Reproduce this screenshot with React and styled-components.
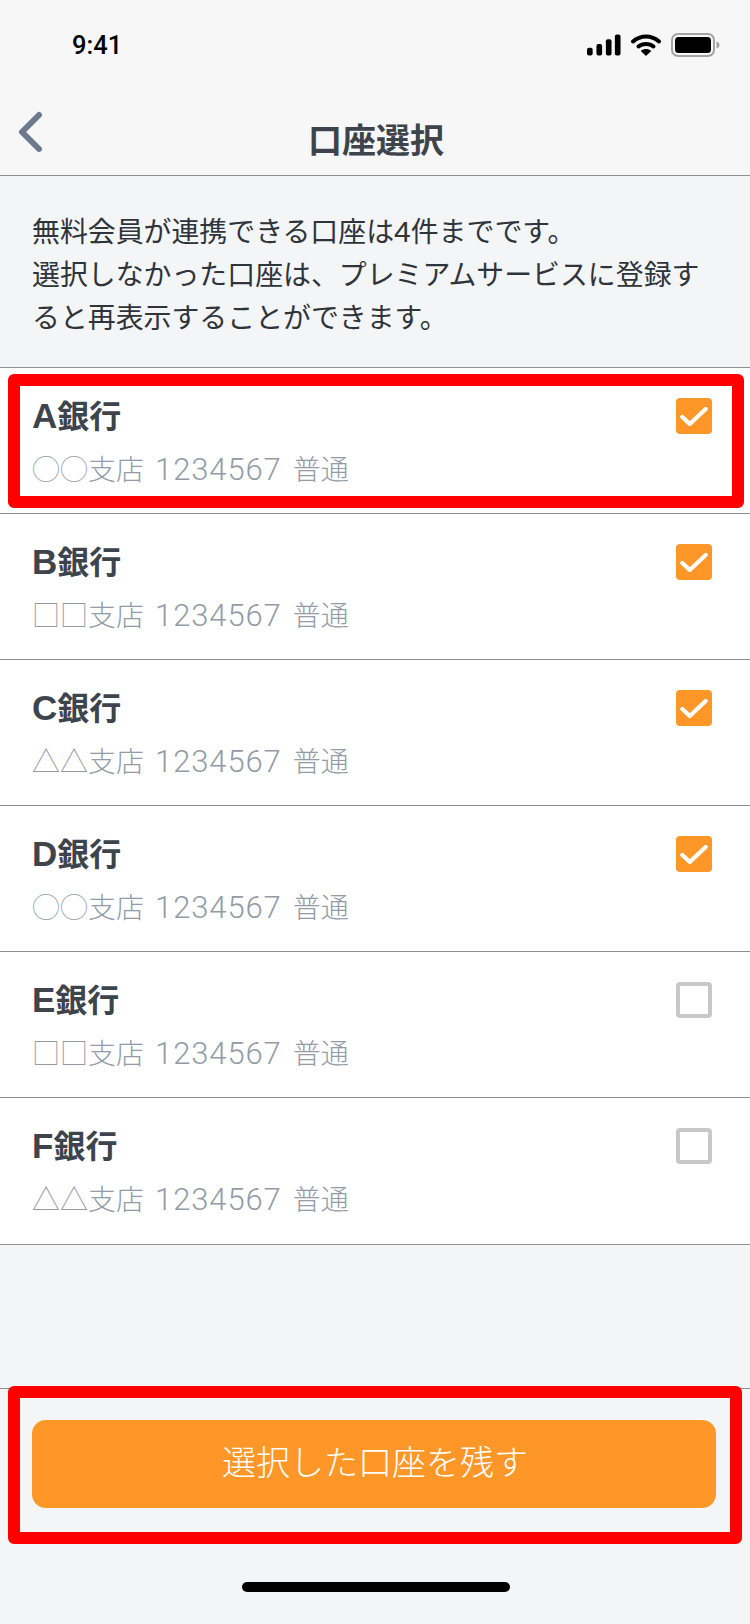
import React from 'react';
import styled, { createGlobalStyle } from 'styled-components';

const JP = `"Noto Sans CJK JP", "Noto Sans", sans-serif`;

const accounts = [
    { letter: 'A', branch: '◯◯', checked: true, framed: true },
    { letter: 'B', branch: '□□', checked: true },
    { letter: 'C', branch: '△△', checked: true },
    { letter: 'D', branch: '◯◯', checked: true },
    { letter: 'E', branch: '□□', checked: false },
    { letter: 'F', branch: '△△', checked: false },
];

export default function App() {
    return (
        <Page>
            <GlobalStyle />
            <TopArea>
                <StatusBar>
                    <Time>9:41</Time>
                    <StatusIcons>
                        <svg width="34" height="22" viewBox="0 0 36 22">
                            <rect x="0" y="14" width="6" height="8" rx="2" />
                            <rect x="10" y="10" width="6" height="12" rx="2" />
                            <rect x="20" y="5" width="6" height="17" rx="2" />
                            <rect x="29.5" y="0" width="6" height="22" rx="2" />
                        </svg>
                        <svg width="30" height="22" viewBox="0 0 30 22">
                            <path d="M2 7.5C9.5 .8 20.5 .8 28 7.5" fill="none" stroke="#000" strokeWidth="4" strokeLinecap="round" />
                            <path d="M7.5 12.5C11.5 9 18.5 9 22.5 12.5" fill="none" stroke="#000" strokeWidth="4" strokeLinecap="round" />
                            <path d="M9.8 17 15 22l5.200-5c-3-2.600-7.400-2.600-10.400 0z" />
                        </svg>
                        <svg width="49" height="24" viewBox="0 0 49 24">
                            <rect x="1" y="1" width="42" height="22" rx="6" fill="none" stroke="#a3a3a3" strokeWidth="2" />
                            <rect x="4" y="4" width="36" height="16" rx="3.500" />
                            <path d="M45.500 8.500c1.800.6 3 1.800 3 3.500s-1.200 2.900-3 3.500z" fill="#a3a3a3" />
                        </svg>
                    </StatusIcons>
                </StatusBar>
                <NavBar>
                    <BackButton>
                        <svg width="28" height="44" viewBox="0 0 28 44">
                            <path d="M23 5 6 22l17 17" fill="none" stroke="#6d7a8e" strokeWidth="6" strokeLinecap="round" strokeLinejoin="round" />
                        </svg>
                    </BackButton>
                    <Title>口座選択</Title>
                </NavBar>
            </TopArea>

            <Intro>
                無料会員が連携できる口座は<IntroDigit>4</IntroDigit>件までです。<br />
                選択しなかった口座は、プレミアムサービスに登録すると再表示することができます。
            </Intro>

            <List>
                {accounts.map(a => (
                    <Row key={a.letter}>
                        <div>
                            <BankName><Letter>{a.letter}</Letter>銀行</BankName>
                            <Branch>{a.branch}支店<Digits>1234567</Digits>普通</Branch>
                        </div>
                        <CheckBox checked={a.checked}>
                            {a.checked && (
                                <svg width="28" height="19" viewBox="0 0 30 20">
                                    <path d="M2.500 10.500 10.500 18 27.500 2" fill="none" stroke="#fff" strokeWidth="4.500" strokeLinecap="round" strokeLinejoin="round" />
                                </svg>
                            )}
                        </CheckBox>
                        {a.framed && <RowFrame />}
                    </Row>
                ))}
            </List>

            <Footer>
                <MainButton>選択した口座を残す</MainButton>
                <FooterFrame />
                <HomeIndicator />
            </Footer>
        </Page>
    );
}

const GlobalStyle = createGlobalStyle`
    html, body {
        margin: 0;
        padding: 0;
        background: #f4f5f7;
    }
`

const Page = styled.div`
    width: 750px;
    height: 1624px;
    display: flex;
    flex-direction: column;
    background: #f4f5f7;
    font-family: ${JP};
    color: #3e444c;
    overflow: hidden;
`

const TopArea = styled.header`
    height: 176px;
    box-sizing: border-box;
    background: #f7f7f8;
    border-bottom: 1px solid #8f8f8f;
`

const StatusBar = styled.div`
    height: 88px;
    box-sizing: border-box;
    padding: 33px 30px 0 72px;
    display: flex;
    justify-content: space-between;
    align-items: flex-start;
`

const Time = styled.span`
    font-family: Roboto, sans-serif;
    font-size: 25.500px;
    font-weight: 500;
    line-height: 24px;
    color: #000;
`

const StatusIcons = styled.div`
    display: flex;
    align-items: center;
    gap: 10px;
`

const NavBar = styled.div`
    position: relative;
    height: 87px;
    display: flex;
    justify-content: center;
`

const BackButton = styled.div`
    position: absolute;
    left: 16px;
    top: 22px;
    height: 44px;
`

const Title = styled.h1`
    margin: 26px 0 0 2px;
    font-size: 34px;
    line-height: 50px;
    font-weight: 700;
    color: #3e444c;
`

const Intro = styled.p`
    margin: 0;
    height: 191px;
    box-sizing: border-box;
    padding: 33px 32px 0;
    font-size: 27.900px;
    line-height: 43px;
    font-weight: 400;
    color: #2f343a;
`

const IntroDigit = styled.span`
    font-family: "Liberation Sans", sans-serif;
    font-size: 30px;
    line-height: 1;
`

const List = styled.div`
    background: #fff;
    border-top: 1px solid #8f8f8f;
`

const Row = styled.div`
    position: relative;
    height: 146px;
    box-sizing: border-box;
    padding: 24px 38px 0 32px;
    display: flex;
    justify-content: space-between;
    align-items: flex-start;
    border-bottom: 1px solid #8f8f8f;

    &:last-child {
        height: 147px;
    }
`

const BankName = styled.div`
    font-size: 32px;
    line-height: 44px;
    font-weight: 700;
    color: #3e444c;
`

const Letter = styled.span`
    font-family: "Liberation Sans", sans-serif;
    font-size: 35px;
`

const Branch = styled.div`
    margin-top: 10px;
    font-size: 28px;
    line-height: 40px;
    font-weight: 300;
    color: #949ba6;
`

const Digits = styled.span`
    margin: 0 11px 0 11px;
    font-family: Roboto, sans-serif;
    font-size: 31px;
    font-weight: 300;
    letter-spacing: 0.9px;
`

const CheckBox = styled.div`
    width: 36px;
    height: 36px;
    margin-top: 6px;
    box-sizing: border-box;
    border-radius: 4px;
    display: flex;
    align-items: center;
    justify-content: center;
    background: ${props => props.checked ? '#ff9728' : '#fff'};
    border: ${props => props.checked ? 'none' : '4px solid #c8c8cc'};
`

const RowFrame = styled.div`
    position: absolute;
    left: 8px;
    right: 6px;
    top: 6px;
    height: 134px;
    box-sizing: border-box;
    border: 12px solid #ff0000;
    border-radius: 6px;
`

const Footer = styled.footer`
    position: relative;
    margin-top: auto;
    height: 236px;
    box-sizing: border-box;
    border-top: 1px solid #8f8f8f;
    padding: 31px 34px 0 32px;
`

const MainButton = styled.button`
    display: block;
    width: 100%;
    height: 88px;
    padding: 0 0 8px 2px;
    border: none;
    border-radius: 14px;
    background: #ff9728;
    color: #fff;
    font-family: ${JP};
    font-size: 34px;
    font-weight: 300;
`

const FooterFrame = styled.div`
    position: absolute;
    left: 8px;
    right: 8px;
    top: -3px;
    height: 158px;
    box-sizing: border-box;
    border: 12px solid #ff0000;
    border-radius: 6px;
`

const HomeIndicator = styled.div`
    position: absolute;
    left: 242px;
    top: 193px;
    width: 268px;
    height: 10px;
    border-radius: 5px;
    background: #000;
`
